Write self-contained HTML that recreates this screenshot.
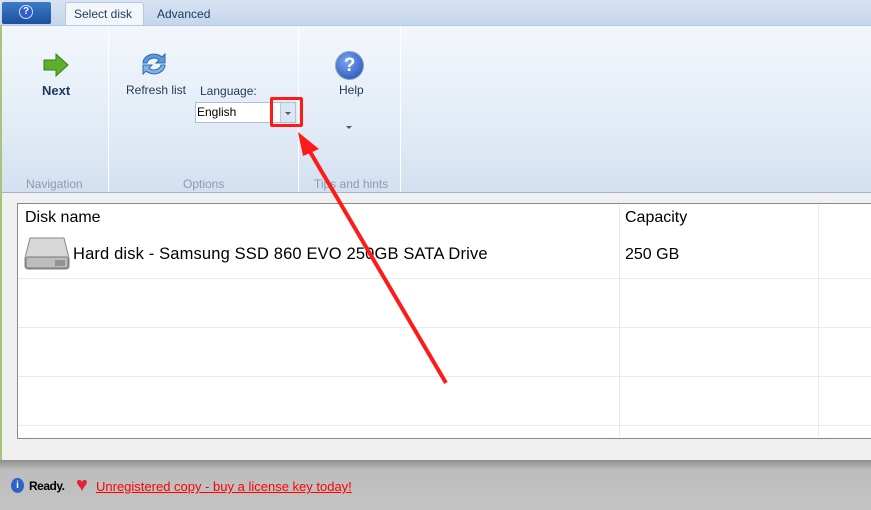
<!DOCTYPE html>
<html><head><style>
*{margin:0;padding:0;box-sizing:border-box}
body{width:871px;height:510px;overflow:hidden;position:relative;font-family:"Liberation Sans",sans-serif;background:#f0f0f0}
.abs{position:absolute}
.tabbar{left:0;top:0;width:871px;height:26px;background:linear-gradient(#d7e3f2,#c4d5ec)}
.ribbon{left:0;top:25px;width:871px;height:168px;background:linear-gradient(#f3f7fc,#dfe9f5 70%,#d3e0f0);border-top:1px solid #b6c9e2;border-bottom:1px solid #9fb4cf}
.sep{top:27px;width:1px;height:165px;background:#c4d3e6;border-right:1px solid #fff}
.t{font-size:12px;color:#1e395b}
.g{font-size:12px;color:#8a9bb2}
.rowline{left:18px;width:853px;height:1px;background:#eaeaea}
</style></head><body>
<div class="abs tabbar"></div>
<div class="abs" style="left:2px;top:2px;width:49px;height:22px;background:linear-gradient(#3d7cc8,#1d4f9c);border-radius:2px"></div>
<div class="abs" style="left:19px;top:5px;width:14px;height:14px;border-radius:50%;background:#2d5fcf;border:1px solid #cfe0ff;color:#fff;font-size:10px;font-weight:bold;text-align:center;line-height:12px">?</div>
<div class="abs" style="left:65px;top:2px;width:79px;height:25px;background:#f3f7fc;border:1px solid #b6c9e2;border-bottom:none;border-radius:3px 3px 0 0"></div>
<div class="abs t" style="left:74px;top:7px;font-size:12px">Select disk</div>
<div class="abs t" style="left:157px;top:7px">Advanced</div>
<div class="abs ribbon"></div>
<div class="abs" style="left:0;top:25px;width:2px;height:436px;background:#a8c47a"></div>
<div class="abs sep" style="left:108px"></div>
<div class="abs sep" style="left:298px"></div>
<div class="abs sep" style="left:400px"></div>
<svg class="abs" style="left:42px;top:52px" width="28" height="26"><path d="M2 8h12V2l12 11-12 11v-6H2z" fill="#5cb02c" stroke="#3b7e19"/></svg>
<div class="abs t" style="left:42px;top:83px;font-weight:bold;font-size:13px">Next</div>
<svg class="abs" style="left:139px;top:49px" width="30" height="30"><path d="M4 14a11 9 0 0 1 19-6l3-3v9h-9l3-3a7 6 0 0 0-12 3z" fill="#5d9ad6" stroke="#2d6bb0"/><path d="M26 16a11 9 0 0 1-19 6l-3 3v-9h9l-3 3a7 6 0 0 0 12-3z" fill="#7fb3e4" stroke="#2d6bb0"/></svg>
<div class="abs t" style="left:126px;top:83px">Refresh list</div>
<div class="abs t" style="left:200px;top:84px">Language:</div>
<div class="abs" style="left:195px;top:102px;width:101px;height:21px;background:#fff;border:1px solid #abc1de"></div>
<div class="abs" style="left:197px;top:105px;font-size:12px;color:#000">English</div>
<div class="abs" style="left:280px;top:103px;width:15px;height:19px;background:#dbe6f4;border-left:1px solid #b6c9e2"></div>
<div class="abs" style="left:285px;top:112px;border:3px solid transparent;border-top:3px solid #555"></div>
<div class="abs" style="left:335px;top:51px;width:29px;height:29px;border-radius:50%;background:radial-gradient(circle at 40% 35%,#7aa7f0,#1f47b8);border:1px solid #8aa;color:#fff;font-weight:bold;font-size:19px;text-align:center;line-height:27px">?</div>
<div class="abs t" style="left:339px;top:83px">Help</div>
<div class="abs" style="left:346px;top:126px;border:3px solid transparent;border-top:3px solid #555"></div>
<div class="abs g" style="left:26px;top:177px">Navigation</div>
<div class="abs g" style="left:183px;top:177px">Options</div>
<div class="abs g" style="left:314px;top:177px">Tips and hints</div>
<div class="abs" style="left:270px;top:97px;width:33px;height:30px;border:3px solid #ff1a1a;border-radius:2px"></div>
<div class="abs" style="left:17px;top:203px;width:856px;height:236px;background:#fff;border:1px solid #828790"></div>
<div class="abs" style="left:619px;top:205px;width:1px;height:232px;background:#e3eaf5"></div>
<div class="abs" style="left:818px;top:205px;width:1px;height:232px;background:#e3eaf5"></div>
<div class="abs rowline" style="top:278px"></div>
<div class="abs rowline" style="top:327px"></div>
<div class="abs rowline" style="top:376px"></div>
<div class="abs rowline" style="top:425px"></div>
<div class="abs" style="left:25px;top:209px;font-size:16px;color:#000">Disk name</div>
<div class="abs" style="left:625px;top:209px;font-size:16px;color:#000">Capacity</div>
<svg class="abs" style="left:24px;top:236px" width="46" height="34"><path d="M6 2h34l5 20v8a3 3 0 0 1-3 3H4a3 3 0 0 1-3-3v-8z" fill="#d8d8d8" stroke="#888"/><rect x="2" y="21" width="42" height="11" rx="2" fill="#bdbdbd" stroke="#777"/><path d="M32 24v6M34 24v6M36 24v6M38 24v6M40 24v6" stroke="#666"/></svg>
<div class="abs" style="left:73px;top:245px;font-size:16.5px;letter-spacing:0.15px;color:#000">Hard disk - Samsung SSD 860 EVO 250GB SATA Drive</div>
<div class="abs" style="left:625px;top:246px;font-size:16px;color:#000">250 GB</div>
<div class="abs" style="left:0;top:460px;width:871px;height:50px;background:linear-gradient(#8e8e8e,#bdbdbd 20%,#c3c3c3)"></div>
<div class="abs" style="left:11px;top:478px;width:13px;height:15px;border-radius:50%;background:#2f62c7;color:#fff;font-size:10px;font-weight:bold;text-align:center;line-height:15px">i</div>
<div class="abs" style="left:29px;top:479px;font-size:12px;font-weight:bold;color:#000;letter-spacing:-0.5px">Ready.</div>
<div class="abs" style="left:76px;top:473px;font-size:20px;line-height:24px;color:#e0253a">♥</div>
<div class="abs" style="left:96px;top:479px;font-size:13px;color:#f00;text-decoration:underline">Unregistered copy - buy a license key today!</div>
<svg class="abs" style="left:0;top:0" width="871" height="510"><line x1="446" y1="383" x2="309" y2="150" stroke="#ff1a1a" stroke-width="4"/><path d="M298 132l21 17-16 7z" fill="#ff1a1a"/></svg>
</body></html>
